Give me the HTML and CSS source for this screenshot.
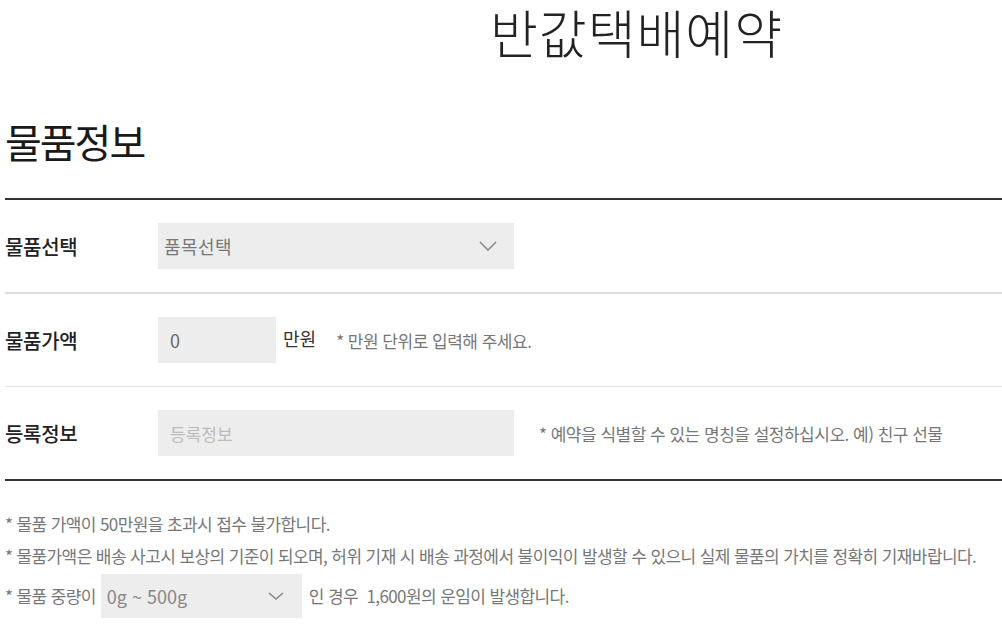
FILE: index.html
```html
<!DOCTYPE html>
<html lang="ko">
<head>
    <meta charset="UTF-8">
    <meta name="viewport" content="width=device-width, initial-scale=1.0">
    <title>반값택배예약</title>
    <link rel="stylesheet" href="styles.css">
</head>
<body>
    <h1 class="page-title">반값택배예약</h1>

    <section class="goods">
        <h2 class="section-title">물품정보</h2>

        <div class="form-table">
            <div class="form-row">
                <div class="form-label">물품선택</div>
                <div class="form-field">
                    <div class="select select-wide">
                        <span>품목선택</span>
                        <svg class="chevron" width="18" height="10" viewBox="0 0 18 10"><path d="M1 1l8 8 8-8" fill="none" stroke="#8a8a8a" stroke-width="1.6"/></svg>
                    </div>
                </div>
            </div>
            <div class="form-row">
                <div class="form-label">물품가액</div>
                <div class="form-field">
                    <div class="input input-short">0</div>
                    <span class="unit">만원</span>
                    <span class="hint hint-near">* 만원 단위로 입력해 주세요.</span>
                </div>
            </div>
            <div class="form-row">
                <div class="form-label">등록정보</div>
                <div class="form-field">
                    <div class="input input-wide placeholder">등록정보</div>
                    <span class="hint hint-far">* 예약을 식별할 수 있는 명칭을 설정하십시오. 예) 친구 선물</span>
                </div>
            </div>
        </div>

        <ul class="notice">
            <li>* 물품 가액이 50만원을 초과시 접수 불가합니다.</li>
            <li>* 물품가액은 배송 사고시 보상의 기준이 되오며, 허위 기재 시 배송 과정에서 불이익이 발생할 수 있으니 실제 물품의 가치를 정확히 기재바랍니다.</li>
            <li class="notice-weight">
                <span>* 물품 중량이</span>
                <div class="select select-small">
                    <span>0g ~ 500g</span>
                    <svg class="chevron" width="16" height="8" viewBox="0 0 16 8"><path d="M1 1l7 6 7-6" fill="none" stroke="#8a8a8a" stroke-width="1.6"/></svg>
                </div>
                <span>인 경우&nbsp; 1,600원의 운임이 발생합니다.</span>
            </li>
        </ul>
    </section>
</body>
</html>
```

FILE: styles.css
```css
body {
    margin: 0;
    padding: 0 0 0 5px;
    font-family: "Noto Sans CJK KR", "Noto Sans", sans-serif;
    color: #222;
    background: #fff;
}
.page-title {
    margin: 0;
    padding-left: 485px;
    font-size: 52px;
    font-weight: 300;
    line-height: 64px;
    letter-spacing: 1px;
    color: #222;
}
.section-title {
    margin: 50px 0 0;
    font-size: 40px;
    font-weight: 400;
    line-height: 54px;
    letter-spacing: -2px;
    color: #1a1a1a;
}
.form-table {
    margin-top: 30px;
    border-top: 2px solid #333;
    border-bottom: 2px solid #333;
}
.form-row {
    display: flex;
    align-items: center;
    padding: 23px 0;
    border-bottom: 1px solid #e2e2e2;
}
.form-row:first-child {
    border-bottom: 2px solid #ddd;
}
.form-row:last-child {
    border-bottom: none;
}
.form-label {
    width: 153px;
    flex-shrink: 0;
    font-size: 20px;
    font-weight: 500;
    letter-spacing: -0.3px;
    color: #222;
}
.form-field {
    display: flex;
    align-items: center;
}
.select, .input {
    display: flex;
    align-items: center;
    box-sizing: border-box;
    background: #ededed;
    height: 46px;
}
.select {
    justify-content: space-between;
}
.select-wide {
    width: 356px;
    padding: 0 17px 0 6px;
    font-size: 18px;
    letter-spacing: 0.4px;
    color: #777;
}
.input {
    padding: 0 12px;
    font-size: 18px;
    color: #666;
}
.input-short {
    width: 118px;
}
.input-wide {
    width: 356px;
    font-size: 17px;
}
.placeholder {
    color: #bbb;
}
.unit {
    margin-left: 7px;
    margin-top: -4px;
    font-size: 18px;
    color: #333;
}
.hint {
    font-size: 17px;
    color: #777;
    letter-spacing: -0.5px;
}
.hint-near {
    margin-left: 20px;
}
.hint-far {
    margin-left: 25px;
}
.notice {
    list-style: none;
    margin: 27px 0 0;
    padding: 0;
    font-size: 17px;
    color: #777;
    letter-spacing: -0.6px;
}
.notice li {
    line-height: 32px;
}
.notice .notice-weight {
    display: flex;
    align-items: center;
    margin-top: 2px;
}
.select-small {
    width: 201px;
    height: 44px;
    margin: 0 7px 0 5px;
    padding: 0 18px 0 6px;
    font-size: 18px;
    letter-spacing: 0;
    color: #888;
}
```
